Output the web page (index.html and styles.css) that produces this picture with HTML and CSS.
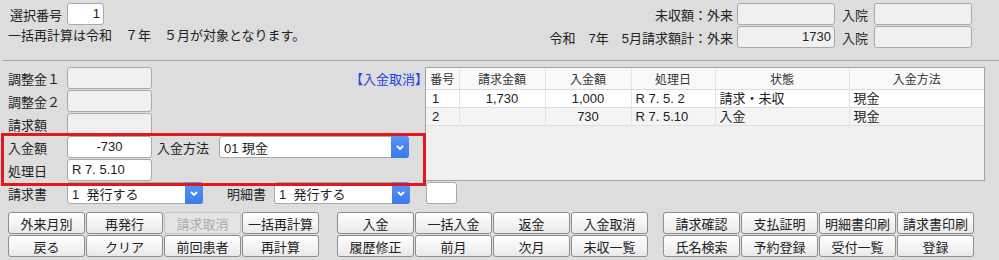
FILE: index.html
```html
<!DOCTYPE html>
<html lang="ja">
<head>
<meta charset="utf-8">
<title>入金</title>
<link rel="stylesheet" href="styles.css">
</head>
<body>
<div class="page">
  <header class="top">
    <div class="top-left">
      <div class="trow">
        <span class="tlbl">選択番号</span>
        <div class="fld fld-white fld-num right">1</div>
      </div>
      <div class="note">一括再計算は令和　７年　５月が対象となります。</div>
    </div>
    <div class="top-right">
      <span class="rlbl">未収額：外来</span>
      <div class="fld fld-wide right"></div>
      <span class="rlbl2">入院</span>
      <div class="fld fld-wide right"></div>
      <span class="rlbl">令和　7年　5月請求額計：外来</span>
      <div class="fld fld-wide right">1730</div>
      <span class="rlbl2">入院</span>
      <div class="fld fld-wide right"></div>
    </div>
  </header>

  <main class="mid">
    <section class="form">
      <div class="frow">
        <span class="lbl">調整金１</span>
        <div class="fld"></div>
        <a class="link">【入金取消】</a>
      </div>
      <div class="frow">
        <span class="lbl">調整金２</span>
        <div class="fld"></div>
      </div>
      <div class="frow">
        <span class="lbl">請求額</span>
        <div class="fld"></div>
      </div>
      <div class="hl">
        <div class="frow">
          <span class="lbl">入金額</span>
          <div class="fld fld-white center">-730</div>
          <span class="lbl lbl-method">入金方法</span>
          <div class="sel sel-method">
            <span class="sel-txt">01 現金</span>
            <span class="sel-btn"><svg width="8" height="5" viewBox="0 0 8 5"><polyline points="1,1 4,4 7,1" fill="none" stroke="#fff" stroke-width="1.8"/></svg></span>
          </div>
        </div>
        <div class="frow">
          <span class="lbl">処理日</span>
          <div class="fld fld-white">R 7. 5.10</div>
        </div>
      </div>
      <div class="frow">
        <span class="lbl">請求書</span>
        <div class="sel sel-doc">
          <span class="sel-txt">1&nbsp; 発行する</span>
          <span class="sel-btn"><svg width="8" height="5" viewBox="0 0 8 5"><polyline points="1,1 4,4 7,1" fill="none" stroke="#fff" stroke-width="1.8"/></svg></span>
        </div>
        <span class="lbl lbl-detail">明細書</span>
        <div class="sel sel-doc">
          <span class="sel-txt">1&nbsp; 発行する</span>
          <span class="sel-btn"><svg width="8" height="5" viewBox="0 0 8 5"><polyline points="1,1 4,4 7,1" fill="none" stroke="#fff" stroke-width="1.8"/></svg></span>
        </div>
      </div>
    </section>

    <section class="side">
      <div class="tbox">
        <table class="grid">
          <colgroup>
            <col class="c1"><col class="c2"><col class="c3"><col class="c4"><col class="c5"><col>
          </colgroup>
          <thead>
            <tr><th>番号</th><th>請求金額</th><th>入金額</th><th>処理日</th><th>状態</th><th>入金方法</th></tr>
          </thead>
          <tbody>
            <tr><td class="l">1</td><td class="c">1,730</td><td class="c">1,000</td><td class="d">R 7. 5. 2</td><td class="d">請求・未収</td><td class="d">現金</td></tr>
            <tr class="alt"><td class="l">2</td><td class="c"></td><td class="c">730</td><td class="d">R 7. 5.10</td><td class="d">入金</td><td class="d">現金</td></tr>
          </tbody>
        </table>
      </div>
      <div class="fld fld-white fld-small"></div>
    </section>
  </main>

  <footer class="btns">
    <div class="grp">
      <button class="btn">外来月別</button>
      <button class="btn">再発行</button>
      <button class="btn" disabled>請求取消</button>
      <button class="btn">一括再計算</button>
      <button class="btn">戻る</button>
      <button class="btn">クリア</button>
      <button class="btn">前回患者</button>
      <button class="btn">再計算</button>
    </div>
    <div class="grp grp2">
      <button class="btn">入金</button>
      <button class="btn">一括入金</button>
      <button class="btn">返金</button>
      <button class="btn">入金取消</button>
      <button class="btn">履歴修正</button>
      <button class="btn">前月</button>
      <button class="btn">次月</button>
      <button class="btn">未収一覧</button>
    </div>
    <div class="grp grp3">
      <button class="btn">請求確認</button>
      <button class="btn">支払証明</button>
      <button class="btn">明細書印刷</button>
      <button class="btn">請求書印刷</button>
      <button class="btn">氏名検索</button>
      <button class="btn">予約登録</button>
      <button class="btn">受付一覧</button>
      <button class="btn">登録</button>
    </div>
  </footer>
</div>
</body>
</html>
```

FILE: styles.css
```css
* { box-sizing: border-box; }

body {
  margin: 0;
  background: #dddddd;
  font-family: "Liberation Sans", "Noto Sans CJK JP", sans-serif;
  font-size: 13px;
  color: #222;
  width: 999px;
  height: 260px;
  overflow: hidden;
}

/* ---------- top ---------- */
.top {
  display: flex;
  justify-content: space-between;
  height: 61px;
  margin-left: 3px;
  padding: 3px 27px 0 5px;
  border-bottom: 1px solid #a9a9a9;
}

.trow {
  display: flex;
  align-items: center;
  height: 22px;
}

.tlbl {
  width: 59px;
  padding-left: 2px;
}

.note {
  margin-top: 1px;
  height: 19px;
  line-height: 19px;
}

.top-right {
  display: grid;
  grid-template-columns: auto 98px auto 98px;
  grid-auto-rows: 22px;
  row-gap: 1px;
  align-items: center;
}

.rlbl {
  justify-self: end;
  margin-right: 4px;
}

.rlbl2 {
  margin: 0 6px 0 7px;
}

/* ---------- fields ---------- */
.fld {
  width: 85px;
  height: 22px;
  border: 1px solid #a9a9a9;
  border-radius: 3px;
  background: #f0f0f0;
  padding: 0 4px;
  line-height: 20px;
  white-space: nowrap;
}

.fld-white { background: #fff; }
.fld-num { width: 37px; }
.fld-wide { width: 98px; }
.fld-small { width: 31px; margin-top: 1px; margin-left: 1px; }

.right { text-align: right; padding-right: 3px; }
.center { text-align: center; }

/* ---------- middle ---------- */
.mid {
  display: flex;
  padding-top: 6px;
}

.form {
  width: 425px;
  padding-left: 8px;
}

.frow {
  display: flex;
  align-items: center;
  height: 22px;
  margin-bottom: 1px;
}

.lbl {
  width: 59px;
  white-space: nowrap;
}

.lbl-method {
  width: 62px;
  margin-left: 5px;
}

.lbl-detail {
  width: 47px;
  margin-left: 24px;
}

.link {
  margin-left: auto;
  margin-right: -3px;
  color: #2440e6;
  cursor: pointer;
}

.hl {
  position: relative;
}

.hl::after {
  content: "";
  position: absolute;
  left: -7px;
  top: -3px;
  width: 419px;
  height: 47px;
  border: 3px solid #e3171f;
  pointer-events: none;
}

.sel {
  display: flex;
  align-items: center;
  height: 22px;
  border: 1px solid #a9a9a9;
  border-radius: 3px;
  background: #fff;
}

.sel-method { width: 190px; }
.sel-doc { width: 136px; }

.sel-txt {
  padding-left: 4px;
  white-space: nowrap;
}

.sel-btn {
  display: flex;
  align-items: center;
  justify-content: center;
  width: 18px;
  height: 22px;
  margin: -1px -1px -1px auto;
  border-radius: 0 3px 3px 0;
  background: linear-gradient(#5894f6, #3c7ae9);
}

/* ---------- table ---------- */
.side {
  width: 560px;
}

.tbox {
  height: 114px;
  border: 1px solid #a3a3a3;
  background: #f0f0f0;
}

.grid {
  width: 100%;
  border-collapse: collapse;
  table-layout: fixed;
}

.c1 { width: 33px; }
.c2 { width: 86px; }
.c3 { width: 86px; }
.c4 { width: 84px; }
.c5 { width: 134px; }

.grid th {
  height: 21px;
  font-weight: normal;
  font-size: 12px;
  color: #333;
  text-align: center;
  background: #f9f9f9;
  border-right: 1px solid #e4e4e4;
  border-bottom: 1px solid #dcdcdc;
  padding: 0;
}

.grid th:last-child,
.grid td:last-child { border-right: none; }

.grid td {
  height: 18px;
  padding: 0;
  background: #fff;
  border-right: 1px solid #e4e4e4;
  border-bottom: 1px solid #dedede;
  white-space: nowrap;
  line-height: 17px;
}

.grid tr.alt td { background: #f4f4f4; }

.grid td.l { padding-left: 6px; }
.grid td.c { text-align: center; }
.grid td.d { padding-left: 4px; }

/* ---------- buttons ---------- */
.btns {
  display: flex;
  margin-top: 7px;
  padding-left: 8px;
}

.grp {
  display: grid;
  grid-template-columns: repeat(4, 77px);
  grid-auto-rows: 22px;
  gap: 1px;
}

.grp2 { margin-left: 18px; }
.grp3 { margin-left: 15px; }

.btn {
  font: inherit;
  color: #222;
  padding: 0;
  border: 1px solid #8e8e8e;
  border-radius: 3px;
  background: linear-gradient(#ffffff, #e9e9e9);
  white-space: nowrap;
}

.btn:disabled {
  color: #ababab;
  border-color: #c6c6c6;
  background: #e4e4e4;
}
```
